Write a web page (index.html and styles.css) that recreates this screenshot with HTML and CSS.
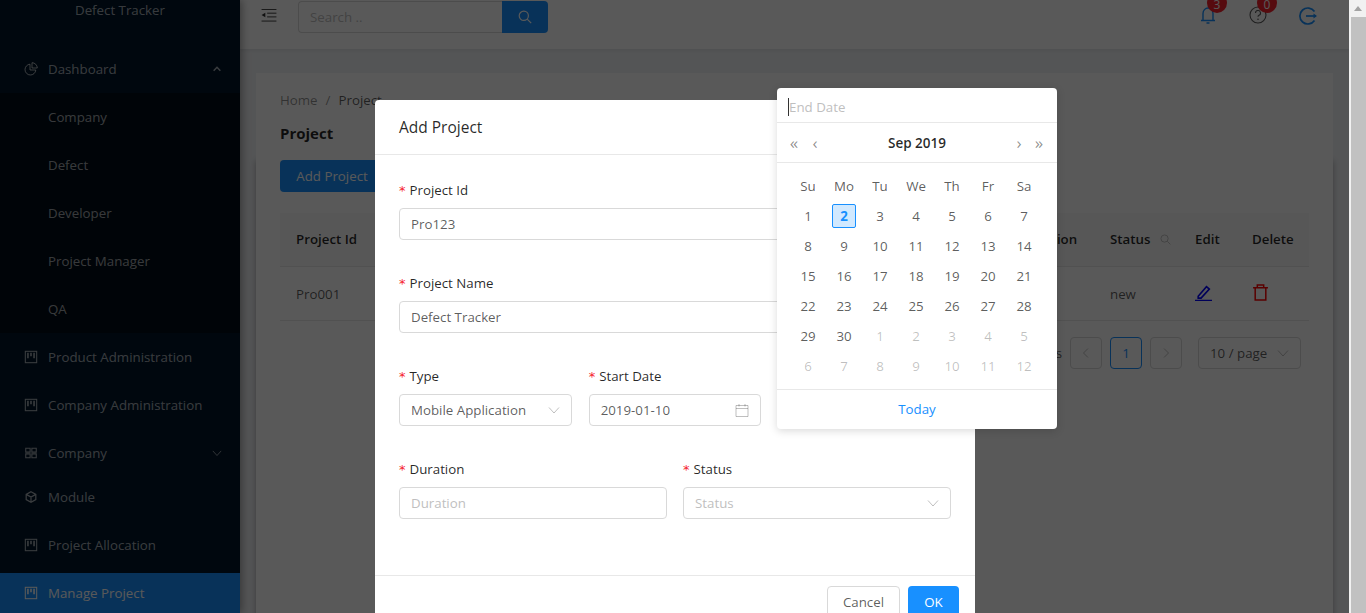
FILE: index.html
```html
<!doctype html>
<html>
<head>
<title>Defect Tracker</title>
<meta charset="utf-8">
<link rel="stylesheet" href="styles.css">
</head>

<body>

<svg class="defs" width="0" height="0">
  <symbol id="i-board" viewBox="-1 -1 16 16"><rect x="0.5" y="0.500" width="13" height="13" fill="none" stroke="currentColor" stroke-width="1.200"/><path d="M3.500 2v6.500M7 2v4M10.500 2v6.500" fill="none" stroke="currentColor" stroke-width="1.800"/></symbol>
  <symbol id="i-down" viewBox="0 0 12 12"><path d="M1 3.500l5 5.500 5-5.500" fill="none" stroke="currentColor"/></symbol>
  <symbol id="i-search" viewBox="0 0 14 14"><circle cx="5.800" cy="5.800" r="4.600" fill="none" stroke="currentColor" stroke-width="1.200"/><path d="M9.200 9.200l4 4" fill="none" stroke="currentColor" stroke-width="1.200"/></symbol>
</svg>

<div class="page">

  <aside class="sider">
    <div class="logo">Defect Tracker</div>
    <ul class="menu">
      <li class="menu-open">
        <svg class="menu-icon" viewBox="0 0 14 14"><path d="M6 2.200a5.400 5.400 0 1 0 5.800 5.800H6z M8 0.700a5.400 5.400 0 0 1 5.300 5.300H8z" fill="none" stroke="currentColor"/></svg>
        <span>Dashboard</span>
        <svg class="menu-arrow" viewBox="0 0 12 12"><path d="M2 8l4-4 4 4" fill="none" stroke="currentColor" stroke-width="1.800"/></svg>
      </li>
      <li class="menu-sub">
        <ul>
          <li>Company</li>
          <li>Defect</li>
          <li>Developer</li>
          <li>Project Manager</li>
          <li>QA</li>
        </ul>
      </li>
      <li><svg class="menu-icon"><use href="#i-board"/></svg><span>Product Administration</span></li>
      <li><svg class="menu-icon"><use href="#i-board"/></svg><span>Company Administration</span></li>
      <li class="menu-tight-below">
        <svg class="menu-icon" viewBox="-1 -1 16 16"><path d="M1 1.500h5v4.500H1zM8 1.500h5v4.500H8zM1 8h5v4.500H1zM8 8h5v4.500H8z" fill="none" stroke="currentColor" stroke-width="1.200"/></svg>
        <span>Company</span>
        <svg class="menu-arrow"><use href="#i-down"/></svg>
      </li>
      <li class="menu-tight-above">
        <svg class="menu-icon" viewBox="-1 -1 16 16"><path d="M7 1l5.500 3v6L7 13l-5.500-3V4zM1.500 4L7 7l5.500-3M7 7v6" fill="none" stroke="currentColor" stroke-width="1.400"/></svg>
        <span>Module</span>
      </li>
      <li><svg class="menu-icon"><use href="#i-board"/></svg><span>Project Allocation</span></li>
      <li class="menu-selected"><svg class="menu-icon"><use href="#i-board"/></svg><span>Manage Project</span></li>
    </ul>
  </aside>

  <div class="main">
    <header class="topbar">
      <svg class="collapse" viewBox="0 0 16 14"><path d="M0 0.500h16M6 4.500h10M6 8.500h10M0 13h16" fill="none" stroke="#333"/><path d="M0 6.500l4-2.500v5z" fill="#333"/></svg>
      <div class="search">
        <div class="search-input">Search ..</div>
        <div class="search-btn"><svg width="14" height="14"><use href="#i-search"/></svg></div>
      </div>
      <div class="top-icons">
        <div class="top-icon">
          <svg class="bell" viewBox="0 0 18 20"><path d="M4 15V8.500a5 5.500 0 0 1 10 0V15M2 15.500h14M7.500 18h3" fill="none" stroke="currentColor" stroke-width="1.400"/></svg>
          <span class="badge">3</span>
        </div>
        <div class="top-icon">
          <svg class="help" viewBox="0 0 18 18"><circle cx="9" cy="9" r="8" fill="none" stroke="currentColor" stroke-width="1.100"/><path d="M6.500 7a2.500 2.500 0 1 1 3.500 2.300c-.7.300-1 .800-1 1.500" fill="none" stroke="currentColor" stroke-width="1.100"/><circle cx="9" cy="13.200" r="0.800" fill="currentColor"/></svg>
          <span class="badge">0</span>
        </div>
        <div class="top-icon">
          <svg class="logout" viewBox="0 0 18 18"><path d="M15.500 4.500a8 8 0 1 0 0 9" fill="none" stroke="currentColor" stroke-width="1.700"/><path d="M7 9h10" fill="none" stroke="currentColor" stroke-width="1.700"/><path d="M18 9l-3.500-2.500v5z" fill="currentColor"/></svg>
        </div>
      </div>
    </header>

    <div class="content">
      <section class="head-card">
        <div class="crumbs"><span>Home</span><i>/</i><b>Project</b></div>
        <h2>Project</h2>
      </section>
      <section class="table-card">
        <button class="btn-add">Add Project</button>
        <table class="grid">
          <thead>
            <tr>
              <th>Project Id</th>
              <th>Project Name</th>
              <th>Type</th>
              <th>Start Date</th>
              <th>End Date</th>
              <th class="col-duration">Duration</th>
              <th class="col-status">Status <svg class="th-search" width="11" height="11"><use href="#i-search"/></svg></th>
              <th class="col-edit">Edit</th>
              <th class="col-delete">Delete</th>
            </tr>
          </thead>
          <tbody>
            <tr>
              <td>Pro001</td>
              <td></td>
              <td></td>
              <td></td>
              <td></td>
              <td></td>
              <td>new</td>
              <td class="cell-icon">
                <svg class="edit-icon" viewBox="0 0 16 16"><path d="M3 11.500L10.800 2.500l2.700 2.300-7.800 8.500H3zM0 15.500h16" fill="none" stroke="#00f" stroke-width="1.500"/></svg>
              </td>
              <td class="cell-icon">
                <svg class="del-icon" viewBox="0 0 16 16"><path d="M1 3.500h14M5 3.500V1h6v2.500M3 3.500V15h10V3.500" fill="none" stroke="#f00" stroke-width="1.400"/></svg>
              </td>
            </tr>
          </tbody>
        </table>
        <div class="pager">
          <span class="pager-total">Total 1 items</span>
          <span class="pager-btn"><svg width="12" height="12" viewBox="0 0 12 12"><path d="M8 1.500L3.500 6 8 10.500" fill="none" stroke="currentColor"/></svg></span>
          <span class="pager-btn pager-on">1</span>
          <span class="pager-btn"><svg width="12" height="12" viewBox="0 0 12 12"><path d="M4 1.500L8.500 6 4 10.500" fill="none" stroke="currentColor"/></svg></span>
          <span class="pager-size">10 / page <svg width="12" height="12"><use href="#i-down"/></svg></span>
        </div>
      </section>
    </div>
  </div>

  <div class="mask">
    <div class="modal">
      <div class="modal-head">Add Project</div>
      <div class="modal-body">
        <div class="form-row">
          <div class="field">
            <label>Project Id</label>
            <div class="input">Pro123</div>
          </div>
        </div>
        <div class="form-row">
          <div class="field">
            <label>Project Name</label>
            <div class="input">Defect Tracker</div>
          </div>
        </div>
        <div class="form-row cols-3">
          <div class="field">
            <label>Type</label>
            <div class="input">Mobile Application <svg class="suffix" width="12" height="12"><use href="#i-down"/></svg></div>
          </div>
          <div class="field">
            <label>Start Date</label>
            <div class="input input-date">2019-01-10
              <svg class="suffix" width="14" height="14" viewBox="0 0 14 14"><path d="M1 2.500h12v11H1zM1 5.500h12M4 1v2.500M10 1v2.500" fill="none" stroke="currentColor"/></svg>
            </div>
          </div>
          <div class="field">
            <label>End Date</label>
            <div class="input is-empty">End Date</div>
          </div>
        </div>
        <div class="form-row cols-2">
          <div class="field">
            <label>Duration</label>
            <div class="input is-empty">Duration</div>
          </div>
          <div class="field">
            <label>Status</label>
            <div class="input is-empty">Status <svg class="suffix" width="12" height="12"><use href="#i-down"/></svg></div>
          </div>
        </div>
      </div>
      <div class="modal-foot">
        <button class="btn-cancel">Cancel</button>
        <button class="btn-ok">OK</button>
      </div>
    </div>

    <div class="calendar">
      <div class="cal-input"><span class="caret"></span>End Date</div>
      <div class="cal-head">
        <span class="cal-nav">«</span>
        <span class="cal-nav">‹</span>
        <strong>Sep 2019</strong>
        <span class="cal-nav">›</span>
        <span class="cal-nav">»</span>
      </div>
      <div class="cal-grid">
        <span class="cal-th">Su</span><span class="cal-th">Mo</span><span class="cal-th">Tu</span><span class="cal-th">We</span><span class="cal-th">Th</span><span class="cal-th">Fr</span><span class="cal-th">Sa</span>
        <span>1</span><span><em class="cal-today">2</em></span><span>3</span><span>4</span><span>5</span><span>6</span><span>7</span>
        <span>8</span><span>9</span><span>10</span><span>11</span><span>12</span><span>13</span><span>14</span>
        <span>15</span><span>16</span><span>17</span><span>18</span><span>19</span><span>20</span><span>21</span>
        <span>22</span><span>23</span><span>24</span><span>25</span><span>26</span><span>27</span><span>28</span>
        <span>29</span><span>30</span><span class="cal-out">1</span><span class="cal-out">2</span><span class="cal-out">3</span><span class="cal-out">4</span><span class="cal-out">5</span>
        <span class="cal-out">6</span><span class="cal-out">7</span><span class="cal-out">8</span><span class="cal-out">9</span><span class="cal-out">10</span><span class="cal-out">11</span><span class="cal-out">12</span>
      </div>
      <div class="cal-foot">Today</div>
    </div>
  </div>

  <div class="scrollbar"><div class="scroll-up"></div><div class="scroll-thumb"></div></div>

</div>

</body>
</html>
```

FILE: styles.css
```css
html, body {
  margin: 0;
  height: 613px;
  overflow: hidden;
}

body {
  font-family: "Open Sans", "Noto Sans", sans-serif;
  font-size: 13.3px;
  line-height: 22px;
  color: rgba(0, 0, 0, 0.65);
  background: #f0f2f5;
}

.defs {
  position: absolute;
}

.page {
  display: flex;
  height: 613px;
  overflow: hidden;
  position: relative;
}

/* sidebar */

.sider {
  flex: 0 0 240px;
  background: #001529;
  color: rgba(255, 255, 255, 0.65);
  box-shadow: 2px 0 8px rgba(0, 0, 0, 0.35);
  position: relative;
  z-index: 1;
}

.logo {
  height: 45px;
  text-align: center;
  line-height: 20px;
}

.menu, .menu ul {
  list-style: none;
  margin: 0;
  padding: 0;
}

.menu > li {
  display: flex;
  align-items: center;
  height: 40px;
  margin: 8px 0;
  padding: 0 16px 0 24px;
}

.menu > li.menu-open {
  height: 48px;
  margin: 0;
}

.menu > li.menu-sub {
  display: block;
  height: auto;
  margin: 0;
  padding: 4px 0;
  background: #000c17;
}

.menu-sub li {
  height: 40px;
  line-height: 40px;
  margin-bottom: 8px;
  padding-left: 48px;
}

.menu-sub li:last-child {
  margin-bottom: 0;
}

.menu > li.menu-sub + li {
  margin-top: 4px;
}

.menu > li.menu-tight-below {
  margin-bottom: 4px;
}

.menu > li.menu-tight-above {
  margin-top: 4px;
}

.menu-selected {
  background: #1890ff;
  color: #fff;
}

.menu-icon {
  width: 14px;
  height: 14px;
  flex: none;
  margin-right: 10px;
}

.menu-arrow {
  width: 10px;
  height: 10px;
  margin-left: auto;
  margin-right: 2px;
}

/* top bar */

.main {
  flex: 1;
  min-width: 0;
}

.topbar {
  display: flex;
  height: 49px;
  background: #fff;
  box-shadow: 0 1px 4px rgba(0, 21, 41, 0.08);
  padding-left: 21px;
  box-sizing: border-box;
  position: relative;
}

.collapse {
  width: 16px;
  height: 13px;
  margin-top: 9px;
}

.search {
  display: flex;
  width: 250px;
  height: 32px;
  margin: 1px 0 0 21px;
}

.search-input {
  flex: 1;
  border: 1px solid #d9d9d9;
  border-right: 0;
  border-radius: 4px 0 0 4px;
  padding: 0 11px;
  line-height: 30px;
  color: #bfbfbf;
}

.search-btn {
  flex: 0 0 46px;
  background: #1890ff;
  color: #fff;
  border-radius: 0 4px 4px 0;
  display: flex;
  align-items: center;
  justify-content: center;
}

.top-icons {
  display: flex;
  margin-left: auto;
  margin-right: 32px;
  gap: 32px;
}

.top-icon {
  position: relative;
  width: 18px;
  height: 20px;
  margin-top: 5px;
}

.bell {
  display: block;
  width: 18px;
  height: 20px;
  color: #1890ff;
}

.help {
  display: block;
  width: 18px;
  height: 18px;
  margin-top: 1px;
  color: rgba(0, 0, 0, 0.65);
}

.logout {
  display: block;
  width: 18px;
  height: 18px;
  margin-top: 2px;
  color: #1890ff;
}

.badge {
  position: absolute;
  left: 8px;
  top: -12px;
  width: 20px;
  height: 20px;
  border-radius: 10px;
  background: #f5222d;
  color: #fff;
  font-size: 12px;
  line-height: 24px;
  text-align: center;
}

/* page content */

.content {
  padding: 24px 16px 0;
}

.head-card {
  background: #fff;
  padding: 16px 24px 0;
  height: 87px;
  box-sizing: border-box;
  position: relative;
  z-index: 1;
}

.crumbs {
  color: rgba(0, 0, 0, 0.45);
}

.crumbs i {
  font-style: normal;
  margin: 0 8px;
}

.crumbs b {
  font-weight: 400;
  color: rgba(0, 0, 0, 0.65);
}

.head-card h2 {
  font-size: 15px;
  font-weight: 700;
  line-height: 22px;
  margin: 11px 0 0;
  color: rgba(0, 0, 0, 0.85);
}

.table-card {
  background: #fff;
  padding: 0 24px;
  height: 460px;
  box-shadow: 0 1px 6px rgba(0, 0, 0, 0.3);
}

.btn-add {
  display: block;
  width: 104px;
  height: 32px;
  border: 0;
  border-radius: 4px;
  background: #1890ff;
  color: #fff;
  font: inherit;
  padding: 0;
}

.grid {
  width: 100%;
  table-layout: fixed;
  border-collapse: collapse;
  margin-top: 21px;
}

.grid th {
  box-sizing: border-box;
  height: 53px;
  padding: 0 16px;
  background: #fafafa;
  border-bottom: 1px solid #e8e8e8;
  text-align: left;
  font-weight: 600;
  color: rgba(0, 0, 0, 0.85);
  white-space: nowrap;
}

.grid td {
  height: 54px;
  padding: 1px 16px 0;
  box-sizing: border-box;
  border-bottom: 1px solid #e8e8e8;
}

.col-duration { width: 90px; }
.col-status { width: 85px; }
.col-edit { width: 57px; }
.col-delete { width: 73px; }

.th-search {
  color: #bfbfbf;
  margin-left: 6px;
  vertical-align: -1px;
}

.grid td.cell-icon {
  padding: 0 0 1px 16px;
}

.edit-icon, .del-icon {
  display: block;
  width: 17px;
  height: 17px;
}

.pager {
  display: flex;
  align-items: center;
  justify-content: flex-end;
  gap: 8px;
  margin: 16px 8px 0 0;
}

.pager-total {
  white-space: nowrap;
}

.pager-btn {
  width: 32px;
  height: 32px;
  box-sizing: border-box;
  border: 1px solid #d9d9d9;
  border-radius: 4px;
  display: flex;
  align-items: center;
  justify-content: center;
  color: rgba(0, 0, 0, 0.25);
}

.pager-on {
  border-color: #1890ff;
  color: #1890ff;
}

.pager-size {
  width: 103px;
  height: 32px;
  box-sizing: border-box;
  border: 1px solid #d9d9d9;
  border-radius: 4px;
  margin-left: 8px;
  padding: 0 11px;
  display: flex;
  align-items: center;
  justify-content: space-between;
}

.pager-size svg {
  color: rgba(0, 0, 0, 0.25);
}

/* dialog */

.mask {
  position: absolute;
  left: 0;
  top: 0;
  width: 1349px;
  height: 613px;
  overflow: hidden;
  background: rgba(0, 0, 0, 0.65);
  z-index: 2;
}

.modal {
  width: 600px;
  margin: 100px 0 0 375px;
  background: #fff;
  border-radius: 4px 4px 0 0;
}

.modal-head {
  padding: 16px 24px;
  border-bottom: 1px solid #e8e8e8;
  font-size: 15.500px;
  font-weight: 500;
  line-height: 22px;
  color: rgba(0, 0, 0, 0.85);
}

.modal-body {
  padding: 24px;
}

.form-row {
  margin-bottom: 32px;
}

.cols-3 {
  display: grid;
  grid-template-columns: repeat(3, 1fr);
  gap: 17px;
}

.cols-2 {
  display: grid;
  grid-template-columns: repeat(2, 1fr);
  gap: 16px;
}

.field label {
  display: block;
  height: 29px;
  color: rgba(0, 0, 0, 0.85);
}

.field label::before {
  content: "*";
  color: #f5222d;
  margin-right: 4px;
  font-family: "DejaVu Sans", sans-serif;
  font-size: 13px;
}

.input {
  height: 32px;
  box-sizing: border-box;
  border: 1px solid #d9d9d9;
  border-radius: 4px;
  padding: 0 11px;
  line-height: 30px;
  display: flex;
  align-items: center;
  justify-content: space-between;
  white-space: nowrap;
}

.is-empty {
  color: #bfbfbf;
}

.suffix {
  color: rgba(0, 0, 0, 0.25);
  flex: none;
}

.modal-foot {
  display: flex;
  justify-content: flex-end;
  gap: 8px;
  padding: 10px 16px;
  border-top: 1px solid #e8e8e8;
}

.modal-foot button {
  height: 32px;
  border-radius: 4px;
  font: inherit;
  padding: 0;
}

.btn-cancel {
  width: 73px;
  border: 1px solid #d9d9d9;
  background: #fff;
  color: rgba(0, 0, 0, 0.65);
}

.btn-ok {
  width: 51px;
  border: 0;
  background: #1890ff;
  color: #fff;
}

/* date popup */

.calendar {
  position: absolute;
  left: 777px;
  top: 88px;
  width: 280px;
  background: #fff;
  border-radius: 4px;
  box-shadow: 0 2px 8px rgba(0, 0, 0, 0.15);
}

.cal-input {
  display: flex;
  align-items: center;
  height: 30px;
  padding: 4px 0 0 11px;
  color: #bfbfbf;
  border-bottom: 1px solid #e8e8e8;
}

.caret {
  width: 1px;
  height: 18px;
  background: #333;
}

.cal-head {
  display: flex;
  align-items: center;
  height: 39px;
  padding: 0 11px 0 10px;
  border-bottom: 1px solid #e8e8e8;
  color: rgba(0, 0, 0, 0.45);
}

.cal-head strong {
  flex: 1;
  text-align: center;
  font-weight: 600;
  font-size: 13.500px;
  color: rgba(0, 0, 0, 0.85);
}

.cal-nav {
  width: 14px;
  text-align: center;
  font-size: 17px;
}

.cal-nav:nth-child(2) {
  margin-left: 7px;
}

.cal-nav:nth-child(4) {
  margin-right: 6px;
}

.cal-grid {
  display: grid;
  grid-template-columns: repeat(7, 36px);
  grid-auto-rows: 30px;
  padding: 8px 0 8px 13px;
  border-bottom: 1px solid #e8e8e8;
  text-align: center;
  line-height: 30px;
}

.cal-out {
  color: rgba(0, 0, 0, 0.25);
}

.cal-today {
  display: block;
  width: 24px;
  height: 24px;
  box-sizing: border-box;
  margin: 3px auto;
  border: 1px solid #1890ff;
  border-radius: 2px;
  background: #d1e9ff;
  color: #1890ff;
  font-style: normal;
  font-weight: 700;
  line-height: 22px;
}

.cal-foot {
  height: 39px;
  line-height: 39px;
  text-align: center;
  color: #1890ff;
}

/* window scrollbar */

.scrollbar {
  flex: 0 0 17px;
  background: #f1f1f1;
  display: flex;
  flex-direction: column;
  position: relative;
  z-index: 3;
}

.scroll-up {
  height: 17px;
  position: relative;
}

.scroll-up::after {
  content: "";
  position: absolute;
  left: 5px;
  top: 6px;
  border-left: 4px solid transparent;
  border-right: 4px solid transparent;
  border-bottom: 5px solid #a3a3a3;
}

.scroll-thumb {
  flex: 1;
  background: #c1c1c1;
  margin-left: 2px;
}
```
